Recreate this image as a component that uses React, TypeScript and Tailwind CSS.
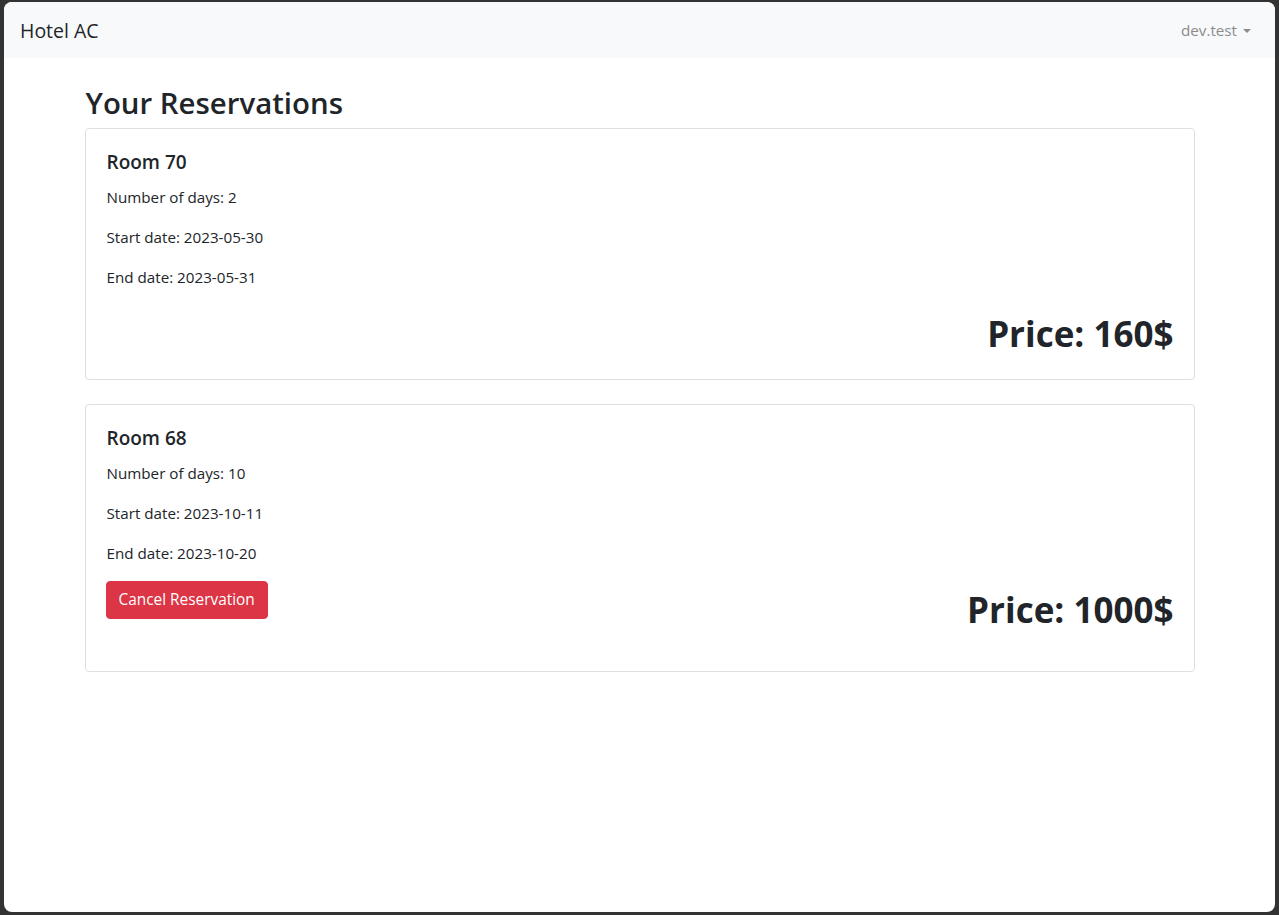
const reservations = [
  { room: 70, days: 2, start: "2023-05-30", end: "2023-05-31", price: 160, cancel: false },
  { room: 68, days: 10, start: "2023-10-11", end: "2023-10-20", price: 1000, cancel: true },
];

const App = () => {
  return (
    <div className="h-[915px] bg-[#333333] pt-[2px] pl-[4px] pr-[4px] pb-[3px] font-['Open_Sans',sans-serif] text-[#212529]">
      <div className="h-full bg-white rounded-t-[8px] rounded-b-[8px] overflow-hidden">
        <nav className="h-[56px] bg-[#f8f9fa] flex items-center justify-between px-4">
          <span className="text-[19.5px] mt-[1px]">Hotel AC</span>
          <span className="flex items-center px-2 mt-[1px] text-[15.2px] text-[#8c8c8c]">
            dev.test
            <span className="ml-[6px] mt-[2px] w-0 h-0 border-l-[4.8px] border-r-[4.8px] border-t-[4.8px] border-l-transparent border-r-transparent border-t-[#8c8c8c]"></span>
          </span>
        </nav>

        <div className="w-[1110px] mx-auto mt-6">
          <h2 className="text-[29.4px] font-semibold leading-[38px] pt-[2px] mb-[6px] ml-[1px]">Your Reservations</h2>

          {reservations.map((r) => (
            <div key={r.room} className="border border-[#dfdfdf] rounded-[4px] p-5 mb-6">
              <h5 className="text-[19px] font-semibold leading-6 pt-[1px] mb-[11px] ml-[1px]">Room {r.room}</h5>
              <p className="text-[15.2px] leading-6 mb-4 ml-[1px]">Number of days: {r.days}</p>
              <p className="text-[15.2px] leading-6 mb-4 ml-[1px]">Start date: {r.start}</p>
              <p className="text-[15.2px] leading-6 mb-4 ml-[1px]">End date: {r.end}</p>
              <div className={"flex items-start justify-between " + (r.cancel ? "pb-4" : "")}>
                <div>
                  {r.cancel && (
                    <button className="bg-[#dc3545] border border-[#dc3545] text-white text-[15.4px] leading-6 px-3 py-[6px] rounded-[4px]">
                      Cancel Reservation
                    </button>
                  )}
                </div>
                <h1 className="text-[35px] font-bold leading-[47px] mt-[5px] mb-[2px]">Price: {r.price}$</h1>
              </div>
            </div>
          ))}
        </div>
      </div>
    </div>
  );
};

export default App;
